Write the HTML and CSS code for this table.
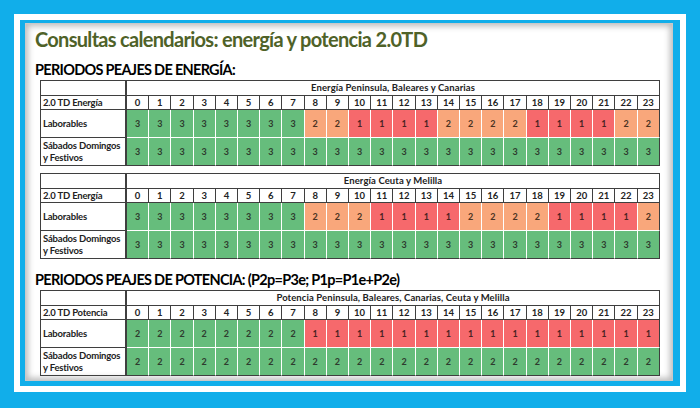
FILE: index.html
```html
<!DOCTYPE html>
<html lang="es">
<head>
<meta charset="utf-8">
<title>Consultas calendarios</title>
<link rel="stylesheet" href="styles.css">
</head>
<body>
<div class="frame">
  <div class="panel">
    <h1 class="title">Consultas calendarios: energía y potencia 2.0TD</h1>
    <h2 class="section">PERIODOS PEAJES DE ENERGÍA:</h2>
    <table class="grid">
      <colgroup><col class="c-lab"><col span="24"></colgroup>
      <tr class="r-top"><td class="lab"></td><td class="merged" colspan="24">Energía Peninsula, Baleares y Canarias</td></tr>
      <tr class="r-hours"><td class="lab">2.0 TD Energía</td><td>0</td><td>1</td><td>2</td><td>3</td><td>4</td><td>5</td><td>6</td><td>7</td><td>8</td><td>9</td><td>10</td><td>11</td><td>12</td><td>13</td><td>14</td><td>15</td><td>16</td><td>17</td><td>18</td><td>19</td><td>20</td><td>21</td><td>22</td><td>23</td></tr>
      <tr class="r-data"><td class="lab">Laborables</td><td class="g">3</td><td class="g">3</td><td class="g">3</td><td class="g">3</td><td class="g">3</td><td class="g">3</td><td class="g">3</td><td class="g">3</td><td class="o">2</td><td class="o">2</td><td class="r">1</td><td class="r">1</td><td class="r">1</td><td class="r">1</td><td class="o">2</td><td class="o">2</td><td class="o">2</td><td class="o">2</td><td class="r">1</td><td class="r">1</td><td class="r">1</td><td class="r">1</td><td class="o">2</td><td class="o">2</td></tr>
      <tr class="r-data last"><td class="lab">Sábados Domingos<br>y Festivos</td><td class="g">3</td><td class="g">3</td><td class="g">3</td><td class="g">3</td><td class="g">3</td><td class="g">3</td><td class="g">3</td><td class="g">3</td><td class="g">3</td><td class="g">3</td><td class="g">3</td><td class="g">3</td><td class="g">3</td><td class="g">3</td><td class="g">3</td><td class="g">3</td><td class="g">3</td><td class="g">3</td><td class="g">3</td><td class="g">3</td><td class="g">3</td><td class="g">3</td><td class="g">3</td><td class="g">3</td></tr>
    </table>
    <table class="grid second">
      <colgroup><col class="c-lab"><col span="24"></colgroup>
      <tr class="r-top"><td class="lab"></td><td class="merged" colspan="24">Energía Ceuta y Melilla</td></tr>
      <tr class="r-hours"><td class="lab">2.0 TD Energía</td><td>0</td><td>1</td><td>2</td><td>3</td><td>4</td><td>5</td><td>6</td><td>7</td><td>8</td><td>9</td><td>10</td><td>11</td><td>12</td><td>13</td><td>14</td><td>15</td><td>16</td><td>17</td><td>18</td><td>19</td><td>20</td><td>21</td><td>22</td><td>23</td></tr>
      <tr class="r-data"><td class="lab">Laborables</td><td class="g">3</td><td class="g">3</td><td class="g">3</td><td class="g">3</td><td class="g">3</td><td class="g">3</td><td class="g">3</td><td class="g">3</td><td class="o">2</td><td class="o">2</td><td class="o">2</td><td class="r">1</td><td class="r">1</td><td class="r">1</td><td class="r">1</td><td class="o">2</td><td class="o">2</td><td class="o">2</td><td class="o">2</td><td class="r">1</td><td class="r">1</td><td class="r">1</td><td class="r">1</td><td class="o">2</td></tr>
      <tr class="r-data last"><td class="lab">Sábados Domingos<br>y Festivos</td><td class="g">3</td><td class="g">3</td><td class="g">3</td><td class="g">3</td><td class="g">3</td><td class="g">3</td><td class="g">3</td><td class="g">3</td><td class="g">3</td><td class="g">3</td><td class="g">3</td><td class="g">3</td><td class="g">3</td><td class="g">3</td><td class="g">3</td><td class="g">3</td><td class="g">3</td><td class="g">3</td><td class="g">3</td><td class="g">3</td><td class="g">3</td><td class="g">3</td><td class="g">3</td><td class="g">3</td></tr>
    </table>
    <h2 class="section second-section">PERIODOS PEAJES DE POTENCIA: (P2p=P3e; P1p=P1e+P2e)</h2>
    <table class="grid">
      <colgroup><col class="c-lab"><col span="24"></colgroup>
      <tr class="r-top"><td class="lab"></td><td class="merged" colspan="24">Potencia Peninsula, Baleares, Canarias, Ceuta y Melilla</td></tr>
      <tr class="r-hours"><td class="lab">2.0 TD Potencia</td><td>0</td><td>1</td><td>2</td><td>3</td><td>4</td><td>5</td><td>6</td><td>7</td><td>8</td><td>9</td><td>10</td><td>11</td><td>12</td><td>13</td><td>14</td><td>15</td><td>16</td><td>17</td><td>18</td><td>19</td><td>20</td><td>21</td><td>22</td><td>23</td></tr>
      <tr class="r-data"><td class="lab">Laborables</td><td class="g">2</td><td class="g">2</td><td class="g">2</td><td class="g">2</td><td class="g">2</td><td class="g">2</td><td class="g">2</td><td class="g">2</td><td class="r">1</td><td class="r">1</td><td class="r">1</td><td class="r">1</td><td class="r">1</td><td class="r">1</td><td class="r">1</td><td class="r">1</td><td class="r">1</td><td class="r">1</td><td class="r">1</td><td class="r">1</td><td class="r">1</td><td class="r">1</td><td class="r">1</td><td class="r">1</td></tr>
      <tr class="r-data last"><td class="lab">Sábados Domingos<br>y Festivos</td><td class="g">2</td><td class="g">2</td><td class="g">2</td><td class="g">2</td><td class="g">2</td><td class="g">2</td><td class="g">2</td><td class="g">2</td><td class="g">2</td><td class="g">2</td><td class="g">2</td><td class="g">2</td><td class="g">2</td><td class="g">2</td><td class="g">2</td><td class="g">2</td><td class="g">2</td><td class="g">2</td><td class="g">2</td><td class="g">2</td><td class="g">2</td><td class="g">2</td><td class="g">2</td><td class="g">2</td></tr>
    </table>
  </div>
</div>
</body>
</html>
```
FILE: styles.css
```css
html, body {
  margin: 0;
  padding: 0;
}
body {
  background: #11aeea;
  width: 700px;
  height: 408px;
  overflow: hidden;
  font-family: Lato, "Open Sans", "Liberation Sans", sans-serif;
}
.frame {
  box-sizing: border-box;
  margin: 14px 0 0 14px;
  width: 672px;
  height: 378px;
  border: 6px solid #ffffff;
  padding: 3px 7px 5px 5px;
}
.panel {
  box-sizing: border-box;
  height: 100%;
  background: #ffffff;
  border: 1px solid #c9c9c9;
  box-shadow: inset 0 0 6px 2px rgba(0, 0, 0, 0.28);
  padding: 0 0 0 9px;
}
.title {
  margin: 0;
  height: 37px;
  line-height: 30px;
  font-size: 20px;
  font-weight: 700;
  color: #4f6228;
  letter-spacing: -0.7px;
}
.section {
  margin: 0;
  height: 19px;
  line-height: 18px;
  font-size: 14.5px;
  font-weight: 700;
  color: #000;
  letter-spacing: -0.7px;
}
.second-section {
  margin-top: 12px;
}
.grid {
  margin-left: 5px;
  width: 620px;
  table-layout: fixed;
  border-collapse: separate;
  border-spacing: 0;
  border-top: 1px solid #3f3f3f;
  border-left: 1px solid #3f3f3f;
  font-size: 9.5px;
  font-weight: 700;
  color: #222;
}
.grid.second {
  margin-top: 7px;
}
.c-lab {
  width: 86px;
}
.grid td {
  box-sizing: border-box;
  padding: 0;
  text-align: center;
  vertical-align: middle;
  border-right: 1px solid #3f3f3f;
  border-bottom: 1px solid #3f3f3f;
  line-height: 12px;
}
.grid td.lab {
  text-align: left;
  padding-left: 2px;
  border-right-width: 2px;
  letter-spacing: -0.2px;
}
.r-top td { height: 15px; }
.r-hours td { height: 14px; }
.r-data td { height: 28px; }
.grid td.merged {
  font-size: 9.5px;
  letter-spacing: 0.1px;
}
.grid td.g,
.grid td.o,
.grid td.r {
  border-right-color: #ffffff;
  border-bottom-color: #ffffff;
  color: #2e3b2e;
  font-size: 9px;
}
.grid tr.last td {
  border-bottom-color: #3f3f3f;
}
.grid tr.r-data td:last-child {
  border-right-color: #3f3f3f;
}
.g { background: #66bd7c; }
.o { background: #f9a77b; }
.r { background: #f6696c; }
.grid td.r { color: #4a2222; }
.grid td.o { color: #4a3322; }
```
